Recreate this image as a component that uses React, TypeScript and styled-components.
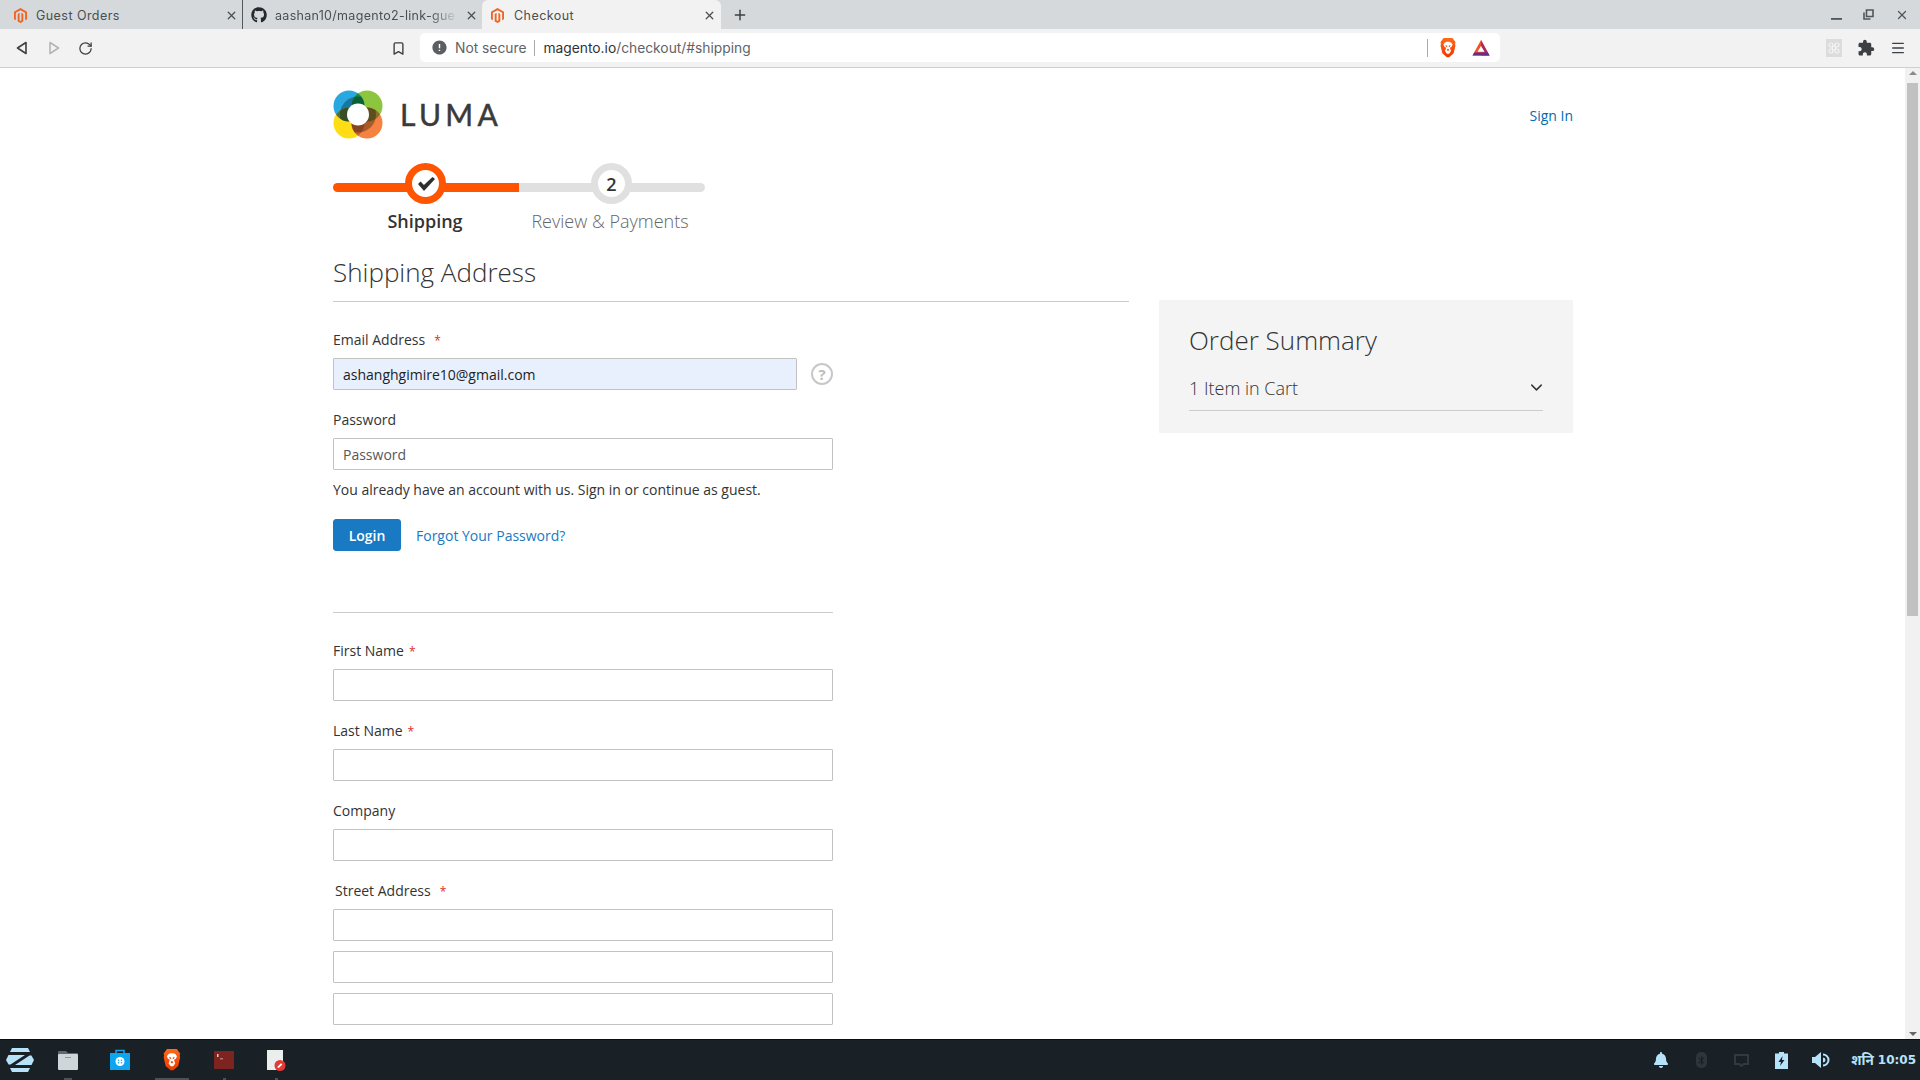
import React from "react";
import styled, { createGlobalStyle } from "styled-components";
import { SiMagento } from "react-icons/si";
import { FaGithub, FaBell } from "react-icons/fa";
import { MdError, MdExtension, MdBluetooth } from "react-icons/md";
import { ChevronDown, RotateCw, Bookmark, X, Plus, Menu } from "lucide-react";

const Global = createGlobalStyle`
  html, body { margin: 0; height: 1080px; overflow: hidden; background: #fff; }
  #root { height: 1080px; }
  * { box-sizing: border-box; }
`;

const Win = styled.div`
  height: 1080px; display: flex; flex-direction: column;
  font-family: "Open Sans", "Noto Sans", sans-serif; color: #333;
`;

/* browser chrome */
const TabStrip = styled.div`
  height: 29px; flex: none; background: #d5d9dc; display: flex; align-items: stretch; position: relative;
`;
const Tab = styled.div<{ $active?: boolean; $sep?: boolean; $end: number }>`
  width: ${(p) => (p.$active ? 239 : 243)}px; margin-left: ${(p) => (p.$active ? -4 : 0)}px;
  flex: none; display: flex; align-items: center; gap: ${(p) => (p.$active ? 8 : 7)}px;
  padding: 1px ${(p) => p.$end}px 0 ${(p) => (p.$sep ? 8 : 13)}px;
  background: ${(p) => (p.$active ? "#f2f2f2" : "transparent")};
  border-radius: ${(p) => (p.$active ? "6px 6px 0 0" : "0")};
  border-right: ${(p) => (p.$sep ? "none" : "1px solid #55595c")};
  font: 12.5px Inter, "Noto Sans", sans-serif; color: #4a4f52; letter-spacing: 0.45px;
`;
const TabTitle = styled.span<{ $fade?: boolean }>`
  flex: 1; white-space: nowrap; overflow: hidden; padding-left: 1px;
  ${(p) => (p.$fade ? "mask-image: linear-gradient(to right, #000 85%, transparent); letter-spacing: 0.3px;" : "")}
`;
const NewTab = styled.div`
  width: 38px; display: flex; align-items: center; justify-content: center; color: #3c4043;
`;
const WinControls = styled.div`
  margin-left: auto; display: flex; align-items: center; gap: 21px; padding-right: 11px; color: #50555a;
`;
const Toolbar = styled.div`
  height: 39px; flex: none; background: #f2f2f2; border-bottom: 1px solid #cfcfcf;
  display: flex; align-items: center; position: relative;
`;
const NavGroup = styled.div`
  display: flex; align-items: center; gap: 16px; padding-left: 14px; width: 391px; color: #3c4043;
`;
const BookmarkSlot = styled.div`
  width: 29px; display: flex; align-items: center; color: #3c4043; padding-top: 1px;
`;
const UrlBar = styled.div`
  width: 1080px; height: 29px; margin-top: -1px; background: #fff; border-radius: 5px;
  display: flex; align-items: center; padding-left: 11px;
  font: 13.8px Inter, "Noto Sans", sans-serif; color: #5f6368;
`;
const SecureText = styled.span`
  margin-left: 7px; padding-right: 8px; border-right: 1px solid #aaa; line-height: 16px;
`;
const UrlText = styled.span`
  margin-left: 8px; color: #5f6368;
  b { font-weight: 400; color: #2f3336; }
`;
const UrlEnd = styled.div`
  margin-left: auto; display: flex; align-items: center; gap: 15px; padding-right: 10px;
`;
const VSep = styled.div`
  width: 1px; height: 18px; background: #aaa; margin-right: -4px;
`;
const ToolRight = styled.div`
  margin-left: auto; display: flex; align-items: center; gap: 15px; padding-right: 14px; color: #3c4043;
`;
const ExtBox = styled.div`
  width: 16px; height: 18px; background: #dcdcdc; display: flex; align-items: center; justify-content: center;
`;

/* page */
const Body = styled.div`
  flex: 1; min-height: 0; display: flex;
`;
const Page = styled.div`
  flex: 1; min-width: 0; overflow: hidden; padding: 21px 0 0 333px; background: #fff;
`;
const Header = styled.div`
  width: 1240px; height: 50px; display: flex; align-items: center; justify-content: space-between;
`;
const Logo = styled.div`
  display: flex; align-items: center; gap: 17px;
`;
const LogoWord = styled.span`
  font: 400 30px/48px Lato, "Open Sans", sans-serif; letter-spacing: 4.3px; color: #3a3a3a;
  -webkit-text-stroke: 0.5px #3a3a3a;
`;
const SignIn = styled.a`
  font-size: 14px; color: #006bb4; margin-top: 2px;
`;
const Steps = styled.div`
  display: flex; width: 372px; margin-top: 25px;
`;
const Step = styled.div`
  width: 186px; position: relative; text-align: center;
`;
const Bar = styled.div<{ $on?: boolean; $pos: "l" | "r" }>`
  height: 9px; margin-top: 19px;
  background: ${(p) => (p.$on ? "#ff5501" : "#e0e0e0")};
  border-radius: ${(p) => (p.$pos === "l" ? "5px 0 0 5px" : "0 5px 5px 0")};
`;
const Dot = styled.div<{ $on?: boolean }>`
  position: absolute; top: -1px; left: 50%; margin-left: -21px; width: 41px; height: 41px; border-radius: 50%;
  background: #fff; border: 7px solid ${(p) => (p.$on ? "#ff5501" : "#e0e0e0")};
  display: flex; align-items: center; justify-content: center; color: #333;
  font-size: 18px; font-weight: 600; line-height: 1;
`;
const StepLabel = styled.div<{ $on?: boolean }>`
  margin-top: 17px; padding-right: ${(p) => (p.$on ? 2 : 4)}px; font-size: 18px; line-height: 24px;
  font-weight: ${(p) => (p.$on ? 600 : 300)}; color: ${(p) => (p.$on ? "#333" : "#666")};
`;
const Columns = styled.div`
  display: flex; width: 1240px; gap: 30px; margin-top: 22px; align-items: flex-start;
`;
const Left = styled.div`
  width: 796px; flex: none;
`;
const Heading = styled.h2`
  margin: 0 0 28px; font-size: 26px; font-weight: 300; line-height: 34px; padding-bottom: 12px;
  border-bottom: 1px solid #ccc; color: #333;
`;
const Form = styled.div`
  width: 500px;
`;
const Field = styled.div`
  margin-bottom: 20px;
`;
const Label = styled.label<{ $indent?: boolean }>`
  display: block; font-size: 14px; line-height: 20px; height: 20px; margin-bottom: 8px; color: #333;
  padding-left: ${(p) => (p.$indent ? 2 : 0)}px;
`;
const Star = styled.span<{ $wide?: boolean }>`
  color: #e02b27; font-size: 12px; line-height: 0; margin-left: ${(p) => (p.$wide ? 9 : 5)}px;
`;
const InputRow = styled.div`
  display: flex; align-items: center; justify-content: space-between;
`;
const Input = styled.input<{ $short?: boolean; $filled?: boolean }>`
  display: block; width: ${(p) => (p.$short ? 464 : 500)}px; height: 32px; padding: 0 9px;
  border: 1px solid #c2c2c2; border-radius: 1px; outline: none;
  background: ${(p) => (p.$filled ? "#e8f0fe" : "#fff")};
  font: 14px "Open Sans", sans-serif; color: #222;
  &::placeholder { color: #575757; opacity: 1; }
`;
const StackInput = styled(Input)`
  margin-bottom: 10px;
`;
const Help = styled.div`
  width: 22px; height: 22px; border-radius: 50%; border: 2px solid #c8c8c8; color: #bdbdbd;
  display: flex; align-items: center; justify-content: center; font-size: 15px; font-weight: 700; line-height: 1;
`;
const Note = styled.div`
  font-size: 14px; line-height: 20px; margin-top: -10px; color: #333;
`;
const Actions = styled.div`
  display: flex; align-items: center; gap: 15px; margin-top: 19px; margin-bottom: 61px;
`;
const Login = styled.button`
  width: 68px; height: 32px; border: 1px solid #1979c3; border-radius: 3px; background: #1979c3; color: #fff;
  font: 600 14px "Open Sans", sans-serif; padding: 0;
`;
const LinkText = styled.a`
  font-size: 14px; color: #1979c3;
`;
const Rule = styled.hr`
  margin: 0 0 28px; border: 0; border-top: 1px solid #ccc;
`;
const Summary = styled.aside`
  width: 414px; height: 133px; margin-top: 45px; background: #f4f4f4; padding: 21px 30px 0;
`;
const SummaryTitle = styled.div`
  font-size: 26px; font-weight: 300; line-height: 38px; color: #333;
`;
const SummaryRow = styled.div`
  display: flex; align-items: center; justify-content: space-between; height: 52px;
  padding: 19px 0 12px; border-bottom: 1px solid #ccc; font-size: 18px; font-weight: 300; color: #333;
  svg { margin: 0 -3px 2px 0; }
`;
const Scrollbar = styled.div`
  width: 15px; flex: none; background: #f1f1f1; display: flex; flex-direction: column; align-items: center;
  padding: 3px 0;
`;
const Arrow = styled.div<{ $down?: boolean }>`
  width: 0; height: 0; border-left: 4px solid transparent; border-right: 4px solid transparent; flex: none;
  ${(p) => (p.$down ? "border-top: 4px solid #666;" : "border-bottom: 4px solid #8a8a8a;")}
`;
const ThumbTrack = styled.div`
  flex: 1; width: 100%; padding: 8px 2px 0;
`;
const Thumb = styled.div`
  height: 533px; background: #c1c1c1;
`;

/* taskbar */
const Taskbar = styled.div`
  height: 41px; flex: none; background: #1a2126; border-top: 1px solid #0c0f12; display: flex; align-items: center;
`;
const TaskItem = styled.div`
  width: 52px; height: 40px; display: flex; align-items: center; justify-content: center; position: relative;
`;
const TaskApps = styled.div`
  display: flex; padding-left: 42px; position: relative;
`;
const ZorinSlot = styled.div`
  position: absolute; left: 6px; top: 8px; width: 28px; height: 24px;
`;
const RunDot = styled.div<{ $w?: number }>`
  position: absolute; bottom: 0; left: 50%; height: 2px; width: ${(p) => p.$w ?? 3}px;
  margin-left: ${(p) => -(p.$w ?? 3) / 2}px; background: #4c5257;
`;
const Tray = styled.div`
  margin-left: auto; display: flex; align-items: center; color: #b7e3fa;
`;
const TrayIcon = styled.div`
  width: 40px; display: flex; align-items: center; justify-content: center; color: #b7e3fa;
`;
const BtPill = styled.div`
  width: 11px; height: 16px; border-radius: 5px; background: #2f353a; color: #1a2126;
  display: flex; align-items: center; justify-content: center;
`;
const Clock = styled.div`
  font: 700 12px "DejaVu Sans", "Noto Sans", sans-serif; color: #b7e3fa; margin: 0 4px 0 10px; white-space: nowrap;
  display: flex; align-items: center; gap: 4px;
`;
const DayName = styled.span`
  font-size: 13.5px;
`;

const Back = ({ off }: { off?: boolean }) => (
  <svg width="16" height="16" viewBox="0 0 16 16" fill="none" stroke={off ? "#b5b5b5" : "#3c4043"} strokeWidth="1.6" strokeLinejoin="round">
    {off ? <path d="M4 2.500 12.500 8 4 13.500Z" /> : <path d="M12 2.500 3.500 8 12 13.500Z" />}
  </svg>
);

const BraveMark = ({ size, id }: { size: number; id: string }) => (
  <svg width={size * 0.9} height={size * 1.05} viewBox="0 0 24 24" preserveAspectRatio="none">
    <defs>
      <linearGradient id={id} x1="0" y1="0" x2="0" y2="1">
        <stop offset="0" stopColor="#ff6a1a" />
        <stop offset="1" stopColor="#f03a00" />
      </linearGradient>
    </defs>
    <path d="M6 1h12l2.600 3.200L22 5.600l-.6 2.400.6 1.600-2.400 9L13.600 23h-3.200l-6-4.400-2.400-9L2.600 8 2 5.600l1.400-1.400Z" fill={`url(#${id})`} />
    <path d="M7.500 6.500 10 5.500h4l2.500 1 1.600 2-1.300 2.600-2.300 1.200L16 16l-2.500 3h-3L8 16l1.500-3.700-2.300-1.200L5.900 8.500Z" fill="#fff" />
    <path d="M8.700 9.200l2.200.8.100 1.500-1.600-.3ZM15.300 9.200l-2.200.8-.1 1.500 1.600-.3ZM12 13.200l1.700 1.600L12 16l-1.700-1.200Z" fill="#f0480a" />
  </svg>
);

const Bat = () => (
  <svg width="18" height="18" viewBox="0 0 18 18">
    <path d="M9 1 17.500 16.500H.5Z" fill="#f0512a" />
    <path d="M9 1 17.500 16.500H9l3.600-2.600L9 7.200Z" fill="#a82a5f" />
    <path d="M.5 16.500h17l-2-3H2.300Z" fill="#662d91" />
    <path d="M9 7 12.500 12.800H5.500Z" fill="#fff" />
  </svg>
);

const LOGO = { tl: [16, 16], tr: [34, 16], bl: [16, 33], br: [34, 33] } as const;
const LumaLogo = () => (
  <svg width="50" height="49" viewBox="0 0 50 49">
    <defs>
      <clipPath id="cTL"><circle cx={LOGO.tl[0]} cy={LOGO.tl[1]} r="15.500" /></clipPath>
      <clipPath id="cTR"><circle cx={LOGO.tr[0]} cy={LOGO.tr[1]} r="15.500" /></clipPath>
      <clipPath id="cBR"><circle cx={LOGO.br[0]} cy={LOGO.br[1]} r="15.500" /></clipPath>
      <clipPath id="cBL"><circle cx={LOGO.bl[0]} cy={LOGO.bl[1]} r="15.500" /></clipPath>
    </defs>
    <circle cx={LOGO.tl[0]} cy={LOGO.tl[1]} r="15.500" fill="#29a8e0" />
    <circle cx={LOGO.tr[0]} cy={LOGO.tr[1]} r="15.500" fill="#8cc63f" />
    <circle cx={LOGO.bl[0]} cy={LOGO.bl[1]} r="15.500" fill="#ffdd15" />
    <circle cx={LOGO.br[0]} cy={LOGO.br[1]} r="15.500" fill="#f58240" />
    <circle cx={LOGO.tr[0]} cy={LOGO.tr[1]} r="15.500" fill="#0f8a50" clipPath="url(#cTL)" />
    <circle cx={LOGO.br[0]} cy={LOGO.br[1]} r="15.500" fill="#86702a" clipPath="url(#cTR)" />
    <circle cx={LOGO.bl[0]} cy={LOGO.bl[1]} r="15.500" fill="#c2622f" clipPath="url(#cBR)" />
    <circle cx={LOGO.tl[0]} cy={LOGO.tl[1]} r="15.500" fill="#4f7038" clipPath="url(#cBL)" />
    <circle cx="25" cy="24.500" r="18" fill="#000" fillOpacity="0.3" clipPath="url(#cTL)" />
    <circle cx="25" cy="24.500" r="18" fill="#000" fillOpacity="0.3" clipPath="url(#cBR)" />
    <circle cx="25" cy="24.500" r="11" fill="#fff" />
  </svg>
);

const Zorin = () => (
  <svg width="28" height="24" viewBox="0 0 28 24" fill="#b7e3fa">
    <path d="M6 0H22L24 4H4Z" />
    <path d="M2.500 7H19L4.500 16.500H2.500L0 12Z" />
    <path d="M25.500 17H9L23.500 7.500H25.500L28 12Z" />
    <path d="M4 20H24L22 24H6Z" />
  </svg>
);

const Folder = () => (
  <svg width="22" height="22" viewBox="0 0 22 22">
    <path d="M1 3a1 1 0 0 1 1-1h7l2 2h9a1 1 0 0 1 1 1v3H1Z" fill="#5c6b73" />
    <rect x="1" y="5" width="20" height="16" rx="1" fill="#cfd6da" />
    <rect x="8" y="8" width="6" height="1" fill="#8d989e" />
  </svg>
);
const Store = () => (
  <svg width="22" height="22" viewBox="0 0 22 22">
    <rect x="1" y="4" width="20" height="17" fill="#0ea5f0" />
    <path d="M7 5V1.500h8V5" fill="none" stroke="#0ea5f0" strokeWidth="1.500" />
    <circle cx="11" cy="12.500" r="4.500" fill="#fff" />
    <circle cx="9.500" cy="11.300" r=".8" fill="#0ea5f0" /><circle cx="12.500" cy="11.300" r=".8" fill="#0ea5f0" />
    <circle cx="9.500" cy="13.700" r=".8" fill="#0ea5f0" /><circle cx="12.500" cy="13.700" r=".8" fill="#0ea5f0" />
  </svg>
);
const Term = () => (
  <svg width="20" height="18" viewBox="0 0 20 18">
    <rect width="20" height="18" fill="#7d2320" />
    <path d="M3 3h1.500v3H3ZM6 7.500h3v.8H6Z" fill="#e8c8c8" />
  </svg>
);
const Note2 = () => (
  <svg width="20" height="22" viewBox="0 0 20 22">
    <rect x="1" y="1" width="16" height="20" fill="#eceeee" />
    <circle cx="14" cy="16.500" r="5.500" fill="#e53935" />
    <path d="M11.500 19l.5-1.800 3-3 1.300 1.300-3 3Z" fill="#fff" />
  </svg>
);
const Volume = () => (
  <svg width="18" height="18" viewBox="0 0 18 18" fill="#b7e3fa">
    <path d="M0 6h3l6-5v16l-6-5H0Z" />
    <path d="M11 2.500a6.500 6.500 0 0 1 0 13v-2a4.500 4.500 0 0 0 0-9Z" />
    <path d="M11 6.500a2.500 2.500 0 0 1 0 5Z" />
  </svg>
);
const ScreenIcon = () => (
  <svg width="15" height="13" viewBox="0 0 15 13" fill="none" stroke="#33393e" strokeWidth="2"><path d="M1 1h13v9H9.500L7.500 12l-2-2H1Z" /></svg>
);
const BatteryIcon = () => (
  <svg width="13" height="17" viewBox="0 0 13 17">
    <path d="M4 0h5v1.500h4V17H0V1.500h4Z" fill="#b7e3fa" />
    <path d="M7.500 4 3.500 10h2.500L5 14l4.500-6H7Z" fill="#1a2126" />
  </svg>
);
const RestoreIcon = () => (
  <svg width="11" height="11" viewBox="0 0 11 11" fill="none" stroke="#50555a" strokeWidth="1.600"><path d="M3.500 1h6.500v6.500H3.500Z" /><path d="M1 3.500V10h6.500" /></svg>
);
const MinIcon = () => (
  <svg width="11" height="11" viewBox="0 0 11 11"><rect y="9" width="11" height="1.800" fill="#50555a" /></svg>
);
const CheckMark = () => (
  <svg width="20" height="16" viewBox="0 0 20 16"><path d="M2 8l2.600-2.400 3.300 3.400L16.500 1 19 3 8 15Z" fill="#2f2f2f" /></svg>
);
const ExtFlower = () => (
  <svg width="14" height="14" viewBox="0 0 14 14" fill="none" stroke="#f4f4f4" strokeWidth="1.200">
    <circle cx="7" cy="7" r="1.800" /><circle cx="4" cy="4" r="2" /><circle cx="10" cy="4" r="2" /><circle cx="4" cy="10" r="2" /><circle cx="10" cy="10" r="2" />
  </svg>
);

export default function App() {
  return (
    <Win>
      <Global />
      <TabStrip>
        <Tab $end={4}>
          <SiMagento size={15} color="#f26322" />
          <TabTitle>Guest Orders</TabTitle>
          <X size={13} strokeWidth={2.4} />
        </Tab>
        <Tab $sep $end={8}>
          <FaGithub size={16} color="#24292e" />
          <TabTitle $fade>aashan10/magento2-link-gue</TabTitle>
          <X size={13} strokeWidth={2.4} />
        </Tab>
        <Tab $active $sep $end={5}>
          <SiMagento size={15} color="#f26322" />
          <TabTitle>Checkout</TabTitle>
          <X size={13} strokeWidth={2.4} />
        </Tab>
        <NewTab><Plus size={16} strokeWidth={2.2} /></NewTab>
        <WinControls>
          <MinIcon />
          <RestoreIcon />
          <X size={14} strokeWidth={2.2} />
        </WinControls>
      </TabStrip>
      <Toolbar>
        <NavGroup>
          <Back />
          <Back off />
          <RotateCw size={15} strokeWidth={2} />
        </NavGroup>
        <BookmarkSlot><Bookmark size={15} strokeWidth={2.2} /></BookmarkSlot>
        <UrlBar>
          <MdError size={17} color="#5a5f63" />
          <SecureText>Not secure</SecureText>
          <UrlText><b>magento.io</b>/checkout/#shipping</UrlText>
          <UrlEnd>
            <VSep />
            <BraveMark size={20} id="brv1" />
            <Bat />
          </UrlEnd>
        </UrlBar>
        <ToolRight>
          <ExtBox><ExtFlower /></ExtBox>
          <MdExtension size={18} color="#3c4043" />
          <Menu size={16} strokeWidth={2} />
        </ToolRight>
      </Toolbar>
      <Body>
        <Page>
          <Header>
            <Logo>
              <LumaLogo />
              <LogoWord>LUMA</LogoWord>
            </Logo>
            <SignIn>Sign In</SignIn>
          </Header>
          <Steps>
            <Step>
              <Bar $on $pos="l" />
              <Dot $on><CheckMark /></Dot>
              <StepLabel $on>Shipping</StepLabel>
            </Step>
            <Step>
              <Bar $pos="r" />
              <Dot>2</Dot>
              <StepLabel>Review &amp; Payments</StepLabel>
            </Step>
          </Steps>
          <Columns>
            <Left>
              <Heading>Shipping Address</Heading>
              <Form>
                <Field>
                  <Label>Email Address<Star $wide>*</Star></Label>
                  <InputRow>
                    <Input $short $filled readOnly defaultValue="ashanghgimire10@gmail.com" />
                    <Help>?</Help>
                  </InputRow>
                </Field>
                <Field>
                  <Label>Password</Label>
                  <Input readOnly placeholder="Password" />
                </Field>
                <Note>You already have an account with us. Sign in or continue as guest.</Note>
                <Actions>
                  <Login>Login</Login>
                  <LinkText>Forgot Your Password?</LinkText>
                </Actions>
                <Rule />
                <Field>
                  <Label>First Name<Star>*</Star></Label>
                  <Input readOnly />
                </Field>
                <Field>
                  <Label>Last Name<Star>*</Star></Label>
                  <Input readOnly />
                </Field>
                <Field>
                  <Label>Company</Label>
                  <Input readOnly />
                </Field>
                <Field>
                  <Label $indent>Street Address<Star $wide>*</Star></Label>
                  <StackInput readOnly />
                  <StackInput readOnly />
                  <StackInput readOnly />
                </Field>
              </Form>
            </Left>
            <Summary>
              <SummaryTitle>Order Summary</SummaryTitle>
              <SummaryRow>
                <span>1 Item in Cart</span>
                <ChevronDown size={19} strokeWidth={1.8} />
              </SummaryRow>
            </Summary>
          </Columns>
        </Page>
        <Scrollbar>
          <Arrow />
          <ThumbTrack><Thumb /></ThumbTrack>
          <Arrow $down />
        </Scrollbar>
      </Body>
      <Taskbar>
        <TaskApps>
          <ZorinSlot><Zorin /></ZorinSlot>
          <TaskItem><Folder /><RunDot $w={8} /></TaskItem>
          <TaskItem><Store /></TaskItem>
          <TaskItem><BraveMark size={22} id="brv2" /><RunDot $w={34} /></TaskItem>
          <TaskItem><Term /><RunDot /></TaskItem>
          <TaskItem><Note2 /><RunDot /></TaskItem>
        </TaskApps>
        <Tray>
          <TrayIcon><FaBell size={16} /></TrayIcon>
          <TrayIcon><BtPill><MdBluetooth size={13} /></BtPill></TrayIcon>
          <TrayIcon><ScreenIcon /></TrayIcon>
          <TrayIcon><BatteryIcon /></TrayIcon>
          <TrayIcon><Volume /></TrayIcon>
          <Clock><DayName>शनि</DayName>10:05</Clock>
        </Tray>
      </Taskbar>
    </Win>
  );
}
